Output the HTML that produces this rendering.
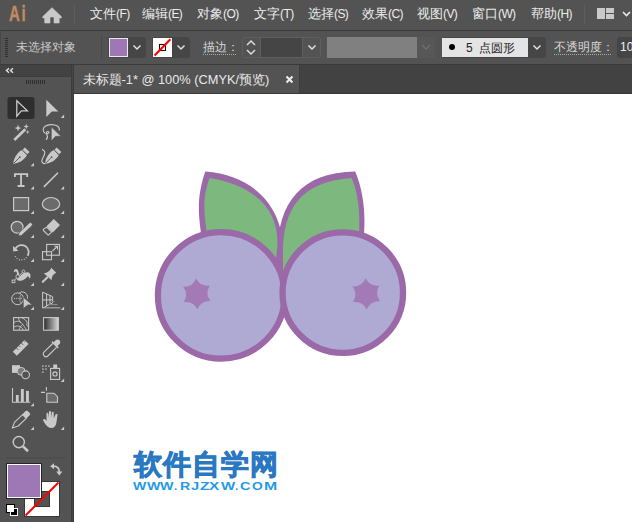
<!DOCTYPE html>
<html><head><meta charset="utf-8">
<style>
*{margin:0;padding:0;box-sizing:border-box}
html,body{width:632px;height:522px;overflow:hidden;background:#535353;font-family:"Liberation Sans",sans-serif}
.a{position:absolute}
.menu{left:0;top:0;width:632px;height:30px;background:#535353}
.mi{position:absolute;top:5px;font-size:13px;line-height:18px;color:#ececec;white-space:nowrap}
.l{font-size:12px;letter-spacing:-0.6px}
.ctrl{left:0;top:31px;width:632px;height:33px;background:#535353}
.tabrow{left:74px;top:65px;width:558px;height:28px;background:#424242}
.canvas{left:74px;top:94px;width:558px;height:428px;background:#fff}
.wl{position:absolute;transform-origin:0 0;font-size:20px;line-height:24px;font-weight:bold;color:#1f9be6}
.ph{left:0;top:65px;width:71px;height:11px;background:#434343}
</style></head><body>
<!-- menu bar -->
<div class="a menu"></div>
<div class="a" style="left:0;top:30px;width:632px;height:1px;background:#3a3a3a"></div>
<div class="a" style="left:8.5px;top:0.5px;font-size:21.5px;line-height:26px;color:#c58960;font-weight:bold;transform:scaleX(0.7);transform-origin:0 0;letter-spacing:2.5px;-webkit-text-stroke:0.4px #c58960">Ai</div>
<svg class="a" style="left:42px;top:6px" width="21" height="19" viewBox="0 0 21 19"><path d="M10 1.7 L19.3 10.6 L19.3 12 L17.2 12 L17.2 17 L12 17 L12 11 L8 11 L8 17 L2.7 17 L2.7 12 L0.8 12 L0.8 10.6 Z" fill="#c9c9c9" stroke="#c9c9c9" stroke-width="0.6" stroke-linejoin="round"/></svg>
<div class="a" style="left:74px;top:5px;width:1px;height:20px;background:#5e5e5e"></div>
<div class="mi" style="left:90px">文件<span class="l">(F)</span></div>
<div class="mi" style="left:142px">编辑<span class="l">(E)</span></div>
<div class="mi" style="left:197px">对象<span class="l">(O)</span></div>
<div class="mi" style="left:254px">文字<span class="l">(T)</span></div>
<div class="mi" style="left:308px">选择<span class="l">(S)</span></div>
<div class="mi" style="left:362px">效果<span class="l">(C)</span></div>
<div class="mi" style="left:417px">视图<span class="l">(V)</span></div>
<div class="mi" style="left:472px">窗口<span class="l">(W)</span></div>
<div class="mi" style="left:531px">帮助<span class="l">(H)</span></div>
<div class="a" style="left:584px;top:5px;width:1px;height:20px;background:#5e5e5e"></div>
<svg class="a" style="left:597px;top:8px" width="18" height="12"><rect x="0" y="0" width="8" height="11" fill="#cacaca"/><rect x="9" y="0" width="8" height="5" fill="#cacaca"/><rect x="9" y="6" width="8" height="5" fill="#cacaca"/></svg>
<svg class="a" style="left:622px;top:11px" width="10" height="7"><path d="M1 1 L4.5 4.5 L8 1" stroke="#ececec" stroke-width="1.6" fill="none"/></svg>

<!-- control bar -->
<div class="a ctrl"></div>
<div class="a" style="left:0;top:31px;width:1px;height:33px;background:#484848"></div>
<div class="a" style="left:0;top:64px;width:632px;height:1px;background:#3b3b3b"></div>
<svg class="a" style="left:5px;top:38px" width="3" height="20"><rect x="0" y="0" width="3" height="1" fill="#303030"/><rect x="0" y="2" width="3" height="1" fill="#303030"/><rect x="0" y="4" width="3" height="1" fill="#303030"/><rect x="0" y="6" width="3" height="1" fill="#303030"/><rect x="0" y="8" width="3" height="1" fill="#303030"/><rect x="0" y="10" width="3" height="1" fill="#303030"/><rect x="0" y="12" width="3" height="1" fill="#303030"/><rect x="0" y="14" width="3" height="1" fill="#303030"/><rect x="0" y="16" width="3" height="1" fill="#303030"/><rect x="0" y="18" width="3" height="1" fill="#303030"/></svg>
<div class="a" style="left:15.5px;top:38.8px;font-size:11.5px;line-height:16px;color:#c8c8c8;white-space:nowrap">未选择对象</div>
<div class="a" style="left:101px;top:35px;width:1px;height:24px;background:#484848"></div>
<!-- fill -->
<div class="a" style="left:108px;top:37px;width:38px;height:21px;border-radius:3px;background:#464646"></div>
<div class="a" style="left:109px;top:38px;width:19px;height:19px;background:#eaeaea"></div>
<div class="a" style="left:110px;top:39px;width:17px;height:17px;background:#9e78b4"></div>
<svg class="a" style="left:132px;top:44px" width="10" height="7"><path d="M1.5 1.5 L5 5 L8.5 1.5" stroke="#e0e0e0" stroke-width="1.5" fill="none"/></svg>
<!-- stroke -->
<div class="a" style="left:152px;top:37px;width:38px;height:21px;border-radius:3px;background:#464646"></div>
<svg class="a" style="left:153px;top:38px" width="19" height="19"><rect x="0" y="0" width="19" height="19" fill="#fff"/><rect x="6.5" y="6.5" width="6" height="6" fill="none" stroke="#111" stroke-width="1.1"/><line x1="1.6" y1="17.6" x2="17.4" y2="1.2" stroke="#f00" stroke-width="2.1"/></svg>
<svg class="a" style="left:176px;top:44px" width="10" height="7"><path d="M1.5 1.5 L5 5 L8.5 1.5" stroke="#e0e0e0" stroke-width="1.5" fill="none"/></svg>
<div class="a" style="left:203px;top:39px;font-size:12px;line-height:16px;color:#d8d8d8;white-space:nowrap">描边：</div>
<div class="a" style="left:203px;top:54px;width:33px;height:1px;background-image:linear-gradient(to right,#aaa 50%,transparent 50%);background-size:2px 1px"></div>
<!-- stroke weight spinner -->
<div class="a" style="left:242px;top:37px;width:79px;height:21px;border:1px solid #5e5e5e;border-radius:3px;background:#535353"></div>
<div class="a" style="left:260px;top:38px;width:43px;height:19px;background:#454545;border-left:1px solid #5e5e5e;border-right:1px solid #5e5e5e"></div>
<svg class="a" style="left:245px;top:39px" width="12" height="17"><path d="M2 6 L6 2 L10 6 M2 11 L6 15 L10 11" stroke="#dcdcdc" stroke-width="1.5" fill="none"/></svg>
<svg class="a" style="left:307px;top:44px" width="10" height="7"><path d="M1.5 1.5 L5 5 L8.5 1.5" stroke="#e0e0e0" stroke-width="1.5" fill="none"/></svg>
<!-- variable width profile (disabled) -->
<div class="a" style="left:327px;top:37px;width:90px;height:21px;background:#808080"></div>
<div class="a" style="left:417px;top:37px;width:18px;height:21px;background:#575757"></div>
<svg class="a" style="left:421px;top:44px" width="10" height="7"><path d="M1 1 L5 5 L9 1" stroke="#6e6e6e" stroke-width="1.5" fill="none"/></svg>
<!-- brush -->
<div class="a" style="left:442px;top:37px;width:104px;height:21px;border-radius:3px;background:#464646"></div>
<div class="a" style="left:442px;top:38px;width:86px;height:19px;background:#e4e4e4"></div>
<div class="a" style="left:449px;top:44px;width:6px;height:6px;border-radius:50%;background:#000"></div>
<div class="a" style="left:466px;top:39px;font-size:12px;line-height:18px;color:#222;white-space:nowrap">5&nbsp; 点圆形</div>
<svg class="a" style="left:532px;top:44px" width="10" height="7"><path d="M1.5 1.5 L5 5 L8.5 1.5" stroke="#e0e0e0" stroke-width="1.5" fill="none"/></svg>
<div class="a" style="left:554px;top:39px;font-size:12px;line-height:16px;color:#d8d8d8;white-space:nowrap">不透明度：</div>
<div class="a" style="left:554px;top:54px;width:57px;height:1px;background-image:linear-gradient(to right,#aaa 50%,transparent 50%);background-size:2px 1px"></div>
<div class="a" style="left:617px;top:37px;width:20px;height:21px;border-radius:3px;background:#454545"></div>
<div class="a" style="left:620px;top:39px;font-size:12px;line-height:17px;color:#f0f0f0">10</div>

<!-- tab row -->
<div class="a" style="left:71px;top:65px;width:3px;height:457px;background:#3c3c3c"></div>
<div class="a" style="left:72px;top:65px;width:1px;height:457px;background:#454545"></div>
<div class="a tabrow"></div>
<div class="a" style="left:74px;top:93px;width:558px;height:1px;background:#383838"></div>
<div class="a canvas"></div>

<!-- tab -->
<div class="a" style="left:74px;top:65px;width:226px;height:28px;background:#535353;border-right:1px solid #3e3e3e"></div>
<div class="a" style="left:82.5px;top:71px;font-size:12.8px;line-height:17px;color:#e8e8e8;white-space:nowrap">未标题-1* @ 100% (CMYK/预览)</div>
<svg class="a" style="left:285px;top:75px" width="9" height="9"><path d="M1.5 1.5 L7.5 7.5 M7.5 1.5 L1.5 7.5" stroke="#ececec" stroke-width="2.1"/></svg>
<!-- artwork -->
<svg class="a" style="left:0;top:0" width="632" height="522" viewBox="0 0 632 522">
<path d="M205.2 171.6 C256.7 175.6 287.3 210.3 283 262 L283 285 L240 270 L202 240 C198.1 213.3 196.5 198.2 205.2 171.6 Z" fill="#9b68a8"/>
<path d="M209.5 177.9 C253.8 184.9 284.8 210.4 276 257.5 L240 262 L207.5 238 C204.5 216.2 201.5 200 209.5 177.9 Z" fill="#7db87f"/>
<path d="M355.2 171.6 C297.5 172.2 274.6 207.9 278 262 L277 285 L320 270 L363.5 240 C365.9 217 364.2 193.2 355.2 171.6 Z" fill="#9b68a8"/>
<path d="M351.7 177.9 C297.2 182 281.2 211.7 283 262 L283 275 L320 262 L359 238 C359.8 217.8 359.7 196.8 351.7 177.9 Z" fill="#7db87f"/>
<circle cx="221.2" cy="295.4" r="63.3" fill="#aeaad4" stroke="#9b68a8" stroke-width="6.2"/>
<circle cx="342.8" cy="292.7" r="60.25" fill="#aeaad4" stroke="#9b68a8" stroke-width="6.3"/>
<path d="M196.16 278.56 Q200.46 286.95 209.80 285.70 Q204.69 293.62 210.45 301.08 Q201.03 300.62 197.44 309.34 Q193.14 300.95 183.80 302.20 Q188.91 294.28 183.15 286.82 Q192.57 287.28 196.16 278.56 Z" fill="#a37ab6"/>
<path d="M365.66 278.26 Q369.96 286.79 379.43 285.58 Q374.20 293.57 379.97 301.17 Q370.44 300.63 366.74 309.44 Q362.44 300.91 352.97 302.12 Q358.20 294.13 352.43 286.53 Q361.96 287.07 365.66 278.26 Z" fill="#a37ab6"/>
</svg>
<!-- watermark -->
<div class="a" style="left:134px;top:445.6px;font-size:27.5px;line-height:38px;font-weight:bold;color:#2b78c2;-webkit-text-stroke:0.9px #2b78c2;letter-spacing:1.1px;white-space:nowrap">软件自学网</div>
<div class="wl" style="left:133.00px;top:478.64px;transform:scale(0.700,0.571)">W</div>
<div class="wl" style="left:146.50px;top:478.64px;transform:scale(0.711,0.571)">W</div>
<div class="wl" style="left:160.20px;top:478.64px;transform:scale(0.711,0.571)">W</div>
<div class="wl" style="left:174.23px;top:478.64px;transform:scale(0.571,0.571)">.</div>
<div class="wl" style="left:179.79px;top:478.64px;transform:scale(0.708,0.571)">R</div>
<div class="wl" style="left:191.00px;top:478.64px;transform:scale(0.730,0.571)">J</div>
<div class="wl" style="left:199.72px;top:478.64px;transform:scale(0.782,0.571)">Z</div>
<div class="wl" style="left:209.23px;top:478.64px;transform:scale(0.767,0.571)">X</div>
<div class="wl" style="left:220.50px;top:478.64px;transform:scale(0.747,0.571)">W</div>
<div class="wl" style="left:235.43px;top:478.64px;transform:scale(0.571,0.571)">.</div>
<div class="wl" style="left:240.28px;top:478.64px;transform:scale(0.723,0.571)">C</div>
<div class="wl" style="left:251.81px;top:478.64px;transform:scale(0.693,0.571)">O</div>
<div class="wl" style="left:263.51px;top:478.64px;transform:scale(0.793,0.571)">M</div>

<!-- left panel -->
<div class="a ph"></div>
<div class="a" style="left:0;top:76px;width:71px;height:1px;background:#3e3e3e"></div>
<svg class="a" style="left:0;top:0" width="74" height="522" viewBox="0 0 74 522">
<!-- header chevrons -->
<path d="M9 68.3 L6.5 70.5 L9 72.7 M13 68.3 L10.5 70.5 L13 72.7" stroke="#dcdcdc" stroke-width="1.5" fill="none"/>
<g fill="#2e2e2e"><rect x="26" y="80" width="1" height="4"/><rect x="28" y="80" width="1" height="4"/><rect x="30" y="80" width="1" height="4"/><rect x="32" y="80" width="1" height="4"/><rect x="34" y="80" width="1" height="4"/><rect x="36" y="80" width="1" height="4"/><rect x="38" y="80" width="1" height="4"/><rect x="40" y="80" width="1" height="4"/><rect x="42" y="80" width="1" height="4"/><rect x="44" y="80" width="1" height="4"/></g>
<!-- selection -->
<rect x="7.5" y="97" width="27" height="22" rx="2.5" fill="#2e2e2e"/>
<path d="M16.8 100.8 L27.4 110.9 L21.3 110.9 L16.8 116.2 Z" fill="none" stroke="#c9c9c9" stroke-width="1.3" stroke-linejoin="miter"/>
<path d="M46.3 99.8 L58.3 111.4 L51.8 111.4 L46.3 117.1 Z" fill="#c9c9c9"/>
<path d="M60.699999999999996 118 L64.1 118 L64.1 114.6 Z" fill="#c9c9c9"/>
<!-- magic wand -->
<path d="M14.3 140 L25.3 129.2" stroke="#c9c9c9" stroke-width="2.6"/>
<path d="M18 124.6 L18.9 127.2 L21.5 128.1 L18.9 129 L18 131.6 L17.1 129 L14.5 128.1 L17.1 127.2 Z" fill="#c9c9c9"/>
<path d="M26.2 123.8 L26.9 125.8 L28.9 126.5 L26.9 127.2 L26.2 129.2 L25.5 127.2 L23.5 126.5 L25.5 125.8 Z" fill="#c9c9c9"/>
<path d="M27.7 130 L28.2 131.6 L29.8 132.1 L28.2 132.6 L27.7 134.2 L27.2 132.6 L25.6 132.1 L27.2 131.6 Z" fill="#c9c9c9"/>
<!-- lasso -->
<path d="M59.2 130.5 C60.2 126.5 56 124.5 51 124.6 C46 124.7 43 127 43.2 130 C43.4 132.5 45.5 134 48 133.5 C49.5 133 49 131.3 47.6 131.5 C46.2 131.8 46 133.5 47 135 C47.8 136.5 47.5 138.5 46 139.8" stroke="#c9c9c9" stroke-width="1.1" fill="none"/>
<path d="M51.3 126.9 L61 136.3 L55.6 136.3 L51.3 141 Z" fill="#c9c9c9" stroke="#535353" stroke-width="0.6"/>
<!-- pen -->
<g transform="translate(0,0)">
<path d="M13.3 163.7 C13.6 158.5 16.5 153.5 21.85 150.05 L26.95 155.15 C23.5 160.5 18.5 163.4 13.3 163.7 Z" fill="#c9c9c9"/>
<path d="M29.56 152.1 L24.9 147.44 L22.64 149.7 L27.3 154.36 Z" fill="#c9c9c9"/>
<path d="M13.9 163.1 L19.3 157.7" stroke="#535353" stroke-width="0.9"/>
<circle cx="19.8" cy="157.2" r="0.9" fill="#535353"/>
</g>
<path d="M30.6 166.2 L34 166.2 L34 162.8 Z" fill="#c9c9c9"/>
<g transform="translate(31.8,0)">
<path d="M13.3 163.7 C13.6 158.5 16.5 153.5 21.85 150.05 L26.95 155.15 C23.5 160.5 18.5 163.4 13.3 163.7 Z" fill="#c9c9c9"/>
<path d="M29.56 152.1 L24.9 147.44 L22.64 149.7 L27.3 154.36 Z" fill="#c9c9c9"/>
<path d="M13.9 163.1 L19.3 157.7" stroke="#535353" stroke-width="0.9"/>
<circle cx="19.8" cy="157.2" r="0.9" fill="#535353"/>
</g>
<path d="M42 149.3 C44.5 150.5 45.5 152 44.5 154.5 C43.5 157 42 159 41.8 161 C41.8 162.5 43 163.5 45 163.6" stroke="#c9c9c9" stroke-width="1.1" fill="none"/>
<!-- type -->
<path d="M14.9 177 L14.9 174.1 L27.2 174.1 L27.2 177 M21.05 174.1 L21.05 186 M17.6 186 L24.5 186" stroke="#c9c9c9" stroke-width="1.8" fill="none"/>
<path d="M30.6 189.5 L34 189.5 L34 186.1 Z" fill="#c9c9c9"/>
<path d="M43.9 186.9 L58 172.8" stroke="#c9c9c9" stroke-width="1.5"/>
<path d="M60.699999999999996 189.5 L64.1 189.5 L64.1 186.1 Z" fill="#c9c9c9"/>
<!-- rect/ellipse -->
<rect x="13.6" y="197.6" width="15" height="13" fill="#6b6b6b" stroke="#c9c9c9" stroke-width="1.2"/>
<path d="M30.6 214 L34 214 L34 210.6 Z" fill="#c9c9c9"/>
<ellipse cx="51" cy="204" rx="8.7" ry="6.5" fill="#6b6b6b" stroke="#c9c9c9" stroke-width="1.2"/>
<path d="M60.699999999999996 214 L64.1 214 L64.1 210.6 Z" fill="#c9c9c9"/>
<!-- shaper -->
<circle cx="17.1" cy="227.2" r="5.9" fill="#6b6b6b" stroke="#c9c9c9" stroke-width="1.2"/>
<path d="M18.1 236.1 L19 232.7 L29.2 223.1 A1.9 1.9 0 0 1 31.8 225.9 L21.6 235.4 Z" fill="#c9c9c9" stroke="#535353" stroke-width="0.8"/>
<path d="M30.6 238 L34 238 L34 234.6 Z" fill="#c9c9c9"/>
<!-- eraser -->
<path d="M53.8 218.88 L60.02 225.1 L52.74 232.38 L46.52 226.16 Z" fill="#c9c9c9"/>
<path d="M46.9 227.3 L51.6 232 L49 234.6 C48.6 235 48 235 47.6 234.6 L43.5 230.5 C43.1 230.1 43.1 229.5 43.5 229.1 Z" fill="none" stroke="#c9c9c9" stroke-width="1.1"/>
<path d="M60.7 238 L64.1 238 L64.1 234.6 Z" fill="#c9c9c9"/>
<!-- rotate -->
<path d="M15.5 248.5 A6.6 6.6 0 1 1 27.6 255.8" stroke="#c9c9c9" stroke-width="1.7" fill="none"/>
<path d="M13 246 L13.2 251.5 L18.5 250.8 Z" fill="#c9c9c9"/>
<path d="M26.5 257.3 A6.6 6.6 0 0 1 14.8 255" stroke="#c9c9c9" stroke-width="1.2" stroke-dasharray="0.9 1.6" fill="none"/>
<path d="M30.6 262 L34 262 L34 258.6 Z" fill="#c9c9c9"/>
<!-- scale -->
<rect x="46.6" y="244.4" width="12.8" height="10.8" fill="none" stroke="#c9c9c9" stroke-width="1.1"/>
<rect x="42.5" y="251.7" width="9" height="8" fill="none" stroke="#c9c9c9" stroke-width="1.1"/>
<path d="M52.5 251 L57.5 246.2 M54.3 246.2 L57.5 246.2 L57.5 249.4" stroke="#c9c9c9" stroke-width="1.1" fill="none"/>
<path d="M60.699999999999996 262 L64.1 262 L64.1 258.6 Z" fill="#c9c9c9"/>
<!-- puppet warp -->
<path d="M13.9 272.5 C13.5 270 15 268.8 16.3 269 C17.8 269.3 18.6 270.8 18.5 272.5 L20 274.5 C22.5 273.5 25 272.3 27.5 272.3 C29.5 272.3 30.8 274 30.5 276.2 L29.8 279 C29.2 277.8 28.6 276.5 27.8 276 C26.5 278.5 23 280.8 19.5 280.8 C17.5 280.8 16.2 279.5 16.3 277.8 C16.4 276 17.3 274.5 16.8 272.5 C16.4 271.3 15 271.3 13.9 272.5 Z" fill="#c9c9c9"/>
<path d="M13.5 281 L22.5 272.3" stroke="#535353" stroke-width="1.8"/>
<path d="M13.5 281 L22.5 272.3" stroke="#c9c9c9" stroke-width="0.9"/>
<circle cx="17.7" cy="276.6" r="1.8" fill="#535353" stroke="#c9c9c9" stroke-width="0.9"/>
<rect x="12.1" y="280.1" width="2.8" height="2.6" fill="#535353" stroke="#c9c9c9" stroke-width="0.9"/>
<circle cx="23.4" cy="271.4" r="1.4" fill="#535353" stroke="#c9c9c9" stroke-width="0.9"/>
<path d="M30.6 286 L34 286 L34 282.6 Z" fill="#c9c9c9"/>
<!-- pin -->
<path d="M51.3 267.8 L56.2 272.8 Q51.6 274.8 51.6 280.2 L43.8 273.2 Q49.4 272.8 51.3 267.8 Z" fill="#c9c9c9"/>
<path d="M47.2 277.4 L42.8 281.8" stroke="#c9c9c9" stroke-width="2.1" stroke-linecap="round"/>
<path d="M60.699999999999996 286 L64.1 286 L64.1 282.6 Z" fill="#c9c9c9"/>
<!-- shape builder -->
<circle cx="17.6" cy="298.8" r="5.9" fill="none" stroke="#c9c9c9" stroke-width="1"/>
<path d="M19.2 293.2 C20.5 291.8 22.4 291.6 24 292.2 C26.6 293.2 28 296 27.4 298.6" fill="none" stroke="#c9c9c9" stroke-width="1"/>
<path d="M21.5 294.2 C19.3 296.6 19.3 301.3 21.5 303.6" stroke="#a8a8a8" stroke-width="0.9" fill="none"/>
<g fill="#c9c9c9"><circle cx="14.6" cy="298.3" r="0.65"/><circle cx="16.8" cy="298.3" r="0.65"/><circle cx="19.0" cy="298.3" r="0.65"/><circle cx="21.2" cy="298.3" r="0.65"/></g>
<path d="M23.3 297.2 L32.3 304.9 L27.9 304.9 L23.3 308.4 Z" fill="#c9c9c9" stroke="#535353" stroke-width="0.7"/>
<path d="M30.6 310 L34 310 L34 306.6 Z" fill="#c9c9c9"/>
<!-- perspective grid -->
<path d="M42.6 292.2 L42.6 308 M42.6 292.2 L52.6 296.6 L52.6 303 L42.6 308 M42.6 300 L52.6 299.8 M46.6 293.9 L46.6 306 M50 295.4 L50 304.3" stroke="#c9c9c9" stroke-width="1" fill="none"/>
<path d="M42.6 307.8 L60.3 307.8" stroke="#b0b0b0" stroke-width="1.1"/>
<path d="M47.5 304.6 L57.5 304.6" stroke="#8e8e8e" stroke-width="1.1"/>
<path d="M50.5 301.5 L55 301.5" stroke="#7a7a7a" stroke-width="1.1"/>
<path d="M60.699999999999996 310 L64.1 310 L64.1 306.6 Z" fill="#c9c9c9"/>
<!-- mesh -->
<rect x="13.6" y="317.6" width="15" height="12.6" fill="none" stroke="#c9c9c9" stroke-width="1.1"/>
<path d="M14 322.5 C17 320.5 20 321 22 323.5 C24 326 25.5 328.5 26.5 330 M18.5 318 C18.8 320 19.5 322 21 323 M14 327 C16.5 325.5 19 325.5 21.5 327.5 L23.5 330 M22 318 C24.5 318.8 26.5 320.5 27 322.5 C27.2 324.5 26 326 28.5 326.5 M19 330 C19.5 328 20.5 326 22.5 324.5" stroke="#c9c9c9" stroke-width="0.9" fill="none"/>
<!-- gradient -->
<defs><linearGradient id="g1" x1="0" x2="1" y1="0" y2="0"><stop offset="0" stop-color="#2a2a2a"/><stop offset="1" stop-color="#d8d8d8"/></linearGradient></defs>
<rect x="43.6" y="317.6" width="14.8" height="12.6" fill="url(#g1)" stroke="#c9c9c9" stroke-width="1.1"/>
<!-- ruler -->
<g transform="translate(0,1.6)"><path d="M12.8 350.2 L24.6 338.4 L28.6 342.4 L16.8 354.2 Z" fill="#c9c9c9"/>
<path d="M16.5 346.5 L18.3 348.3 M19 344 L20.3 345.3 M21.5 341.5 L23.3 343.3 M24 339 L25.3 340.3" stroke="#535353" stroke-width="0.9"/></g>
<!-- eyedropper -->
<path d="M52.7 343.5 L44 352.2 C43 353.2 43 355 44.2 356 C45.2 357 46.8 357 47.8 356 L56.5 347.3" fill="none" stroke="#c9c9c9" stroke-width="1.1"/>
<path d="M51.5 342.3 L57.7 348.5 L58.8 347.4 L57.5 346.1 L59.5 344 C60.5 343 60.5 341.2 59.5 340.2 C58.5 339.2 56.7 339.2 55.7 340.2 L53.7 342.3 L52.5 341 Z" fill="#c9c9c9"/>
<!-- blend -->
<rect x="12" y="365.2" width="8" height="7.7" fill="#c9c9c9"/>
<circle cx="21.2" cy="371.3" r="3.9" fill="#7a7a7a" stroke="#c9c9c9" stroke-width="1"/>
<circle cx="25.6" cy="374.8" r="3.9" fill="#535353" stroke="#c9c9c9" stroke-width="1.1"/>
<!-- symbol sprayer -->
<g fill="#9a9a9a"><rect x="42" y="365.2" width="1.8" height="1.8"/><rect x="45" y="365.2" width="1.8" height="1.8"/><rect x="48" y="365.2" width="1.8" height="1.8"/><rect x="42" y="368.2" width="1.8" height="1.8"/><rect x="45" y="368.2" width="1.8" height="1.8"/><rect x="42" y="371.2" width="1.8" height="1.8"/></g>
<rect x="50.6" y="368.4" width="9" height="11" fill="none" stroke="#c9c9c9" stroke-width="1.1"/>
<rect x="53.2" y="364.5" width="4" height="3.6" fill="#c9c9c9"/>
<circle cx="55" cy="373.9" r="2.1" fill="none" stroke="#c9c9c9" stroke-width="1.2"/>
<path d="M60.699999999999996 382 L64.1 382 L64.1 378.6 Z" fill="#c9c9c9"/>
<!-- graph -->
<path d="M12.5 388 L12.5 402.2 L30.2 402.2" stroke="#c9c9c9" stroke-width="1.1" fill="none"/>
<rect x="15.9" y="395" width="2.8" height="7" fill="#c9c9c9"/>
<rect x="20.9" y="389" width="2.9" height="13" fill="#c9c9c9"/>
<rect x="26" y="390.9" width="2.9" height="11" fill="#c9c9c9"/>
<path d="M30.6 406.3 L34 406.3 L34 402.90000000000003 Z" fill="#c9c9c9"/>
<!-- artboard -->
<path d="M46.4 386.9 L46.4 390.7 M41 392.4 L45 392.4" stroke="#c9c9c9" stroke-width="1.1"/>
<path d="M46.8 393.2 L54 393.2 L57.5 396.7 L57.5 402.2 L46.8 402.2 Z" fill="#6b6b6b" stroke="#c9c9c9" stroke-width="1.1"/>
<!-- pencil -->
<path d="M12.2 428.1 L14.6 422.2 L22.6 414.6 L26.2 418.4 L18.2 426 Z" fill="none" stroke="#c9c9c9" stroke-width="1.1" stroke-linejoin="round"/>
<path d="M22.2 414.4 L25.6 411.1 C26.2 410.5 27.1 410.5 27.7 411.1 L29.7 413.1 C30.3 413.7 30.3 414.6 29.7 415.2 L26.4 418.6 Z" fill="#c9c9c9"/>
<path d="M30.6 430 L34 430 L34 426.6 Z" fill="#c9c9c9"/>
<!-- hand -->
<path d="M47 426 C45 424 43 420.5 43.2 419.5 C43.5 418.5 45 418.8 46.5 420.8 L46.5 413.5 C46.5 412.4 48.3 412.4 48.3 413.5 L48.6 418 L49 412 C49 410.8 51 410.8 51 412 L51.3 418 L51.8 412.6 C51.8 411.5 53.7 411.5 53.7 412.6 L53.8 418.5 L55.5 414.5 C56 413.5 57.8 414 57.5 415 L56.5 422 C56 425.5 54.5 428 51.5 428 C49.5 428 48 427.2 47 426 Z" fill="#c9c9c9"/>
<path d="M60.699999999999996 430 L64.1 430 L64.1 426.6 Z" fill="#c9c9c9"/>
<!-- zoom -->
<circle cx="18.8" cy="442.1" r="5.6" fill="none" stroke="#c9c9c9" stroke-width="1.4"/>
<path d="M23 446.4 L28 451.2" stroke="#c9c9c9" stroke-width="2.6"/>
<!-- separator -->
<rect x="6" y="457.5" width="60" height="1" fill="#4a4a4a"/>
<!-- swatches -->
<rect x="24" y="481" width="36" height="36" fill="#383838"/>
<rect x="25" y="482" width="34" height="34" fill="#fff"/>
<rect x="34" y="491" width="16" height="16" fill="#383838"/>
<rect x="35" y="492" width="14" height="14" fill="#535353"/>
<path d="M25.5 515.5 L58.5 482.5" stroke="#f00" stroke-width="2"/>
<rect x="6" y="463" width="36" height="36" fill="#262626"/>
<rect x="7" y="464" width="34" height="34" fill="#fff"/>
<rect x="8" y="465" width="32" height="32" fill="#9e78b4"/>
<path d="M53.3 466.2 C57 466.2 59.3 468 59.3 472.2" fill="none" stroke="#c9c9c9" stroke-width="1.7"/>
<path d="M50.2 466.2 L54 463.2 L54 469.2 Z" fill="#c9c9c9"/>
<path d="M56.2 471.6 L62.4 471.6 L59.3 475.6 Z" fill="#c9c9c9"/>
<rect x="6.5" y="504.5" width="8" height="8" fill="#fff" stroke="#000" stroke-width="1"/>
<rect x="10.5" y="508.5" width="7" height="7" fill="#000" stroke="#fff" stroke-width="1"/>
<rect x="7" y="505" width="7" height="7" fill="#fff"/>
</svg>
</body></html>
